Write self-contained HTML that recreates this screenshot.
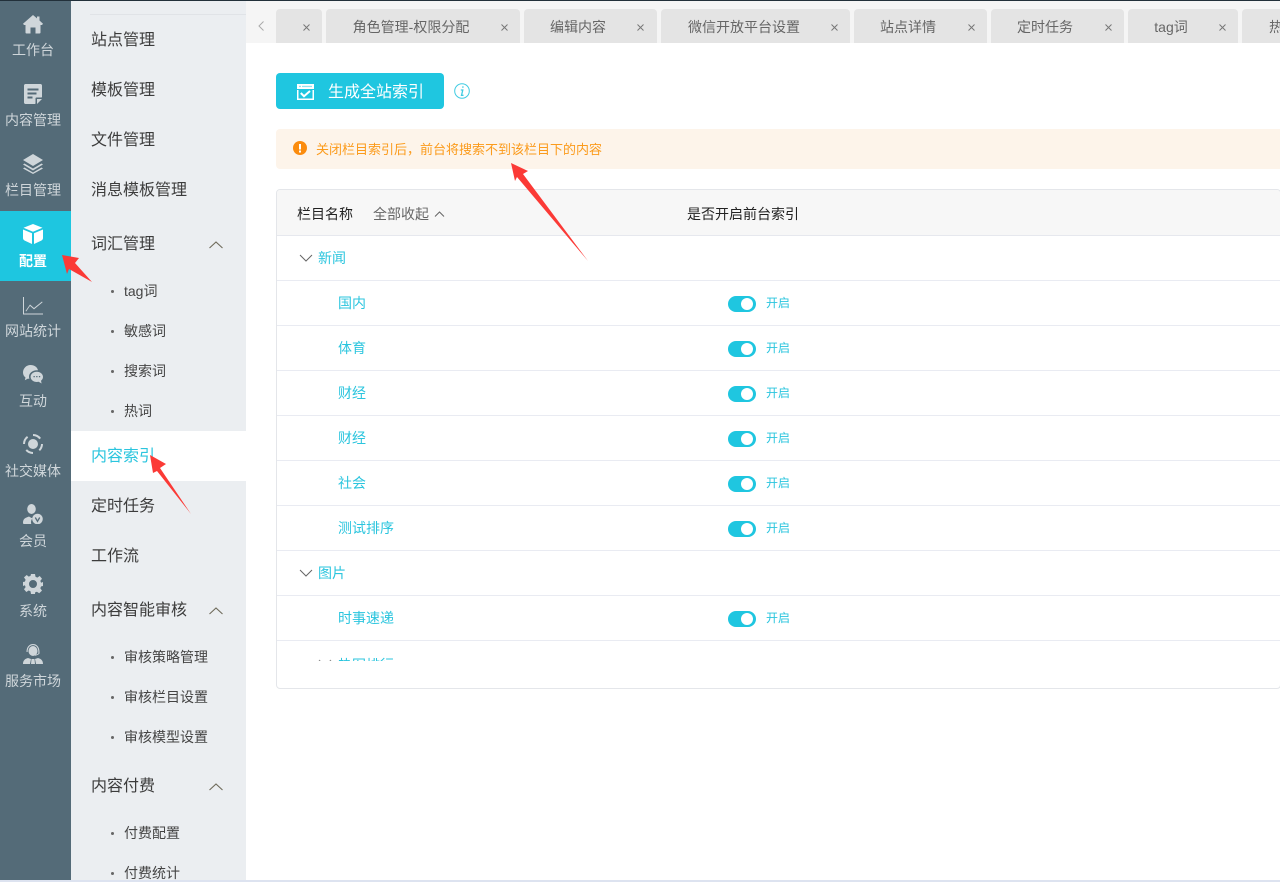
<!DOCTYPE html>
<html lang="zh"><head><meta charset="utf-8"><title>内容索引</title>
<style>
*{box-sizing:border-box}
html,body{margin:0;padding:0;width:1280px;height:882px;overflow:hidden;background:#fff;font-family:"Liberation Sans","Noto Sans CJK SC",sans-serif}
.a{position:absolute;white-space:nowrap}
#top{left:0;top:0;width:1280px;height:1px;background:#22303a;z-index:9}
#bot{left:0;top:880px;width:1280px;height:2px;background:#dde3f0;z-index:9}
#nav{left:0;top:0;width:71px;height:880px;background:#546b78}
.ni{position:absolute;left:0;width:71px;height:70px;color:#cfd6da;font-size:14px;text-align:center}
.ni svg{position:absolute;left:23px;top:14px;width:20px;height:20px;fill:#cfd6da}
.ni span{position:absolute;left:0;width:66px;top:40px;line-height:20px;text-align:center;white-space:nowrap}
.ni.on{background:#1ec6e0;color:#fff;font-weight:bold}
.ni.on svg{fill:#fff}
#side{left:71px;top:0;width:175px;height:880px;background:#ebeef1;overflow:hidden}
.s1{position:absolute;left:20px;font-size:16px;line-height:20px;color:#3c3c3c;margin-top:2px}
.s2{position:absolute;left:53px;font-size:14px;line-height:20px;color:#444}
.dot{position:absolute;left:40px;width:3px;height:3px;background:#666;border-radius:50%}
.cv{position:absolute;left:137px;width:16px;height:10px}
#tabs{left:246px;top:1px;width:1034px;height:42px;background:#f5f5f5;overflow:hidden}
.t{position:absolute;top:8px;height:34px;background:#e4e4e4;border-radius:4px 4px 0 0;font-size:14px;line-height:36px;color:#666}
.t b{font-weight:normal;position:absolute;left:0;top:0;text-align:center}
.t i{position:absolute;top:15px;width:7px;height:7px;margin-left:-.5px}
#btn{left:276px;top:73px;width:168px;height:36px;background:#1fc6e0;border-radius:4px;color:#fff;font-size:16px;line-height:40px;padding-left:52px}
#tip{left:276px;top:129px;width:1004px;height:40px;background:#fdf4ea;border-radius:4px 0 0 4px;color:#fb9b1c;font-size:13px;line-height:42px;padding-left:40px}
#tbl{left:276px;top:189px;width:1005px;height:500px;border:1px solid #e4e6ea;border-radius:4px;overflow:hidden}
#hd{position:absolute;left:0;top:0;width:100%;height:46px;background:#f7f7f7;border-bottom:1px solid #e6e8ee}
#hd .c{margin-top:1px}
.line{position:absolute;left:0;width:100%;height:1px;background:#e9ebf2}
.c{position:absolute;font-size:14px;line-height:20px;color:#2bc5de;white-space:nowrap}
.sw{position:absolute;left:451px;width:28px;height:16px;border-radius:8px;background:#1fc6e0}
.sw:after{content:"";position:absolute;right:3px;top:2px;width:12px;height:12px;border-radius:50%;background:#fff}
.on2{position:absolute;left:489px;font-size:12px;line-height:20px;color:#2bc5de}
.arrow{position:absolute;left:0;top:0;z-index:8;pointer-events:none}
</style></head><body>
<div class="a" id="top"></div>
<div class="a" id="nav">
<div class="ni" style="top:0"><svg style="top:14px" viewBox="0 0 20 20"><path d="M10 1 14 4.400V2.500h2.500v4L20 9.800l-1 1.200H17.500v7.500c0 .6-.4 1-1 1H12.500v-6h-5v6h-4c-.6 0-1-.4-1-1V11H1L0 9.800z"/></svg><span>工作台</span></div>
<div class="ni" style="top:70px"><svg viewBox="0 0 20 20"><path fill-rule="evenodd" d="M2.500 0h15c.8 0 1.500.7 1.500 1.500V13l-.5.500H13.500c-.6 0-1 .4-1 1v5l-.5.500H2.500C1.700 20 1 19.300 1 18.500V1.500C1 .7 1.700 0 2.500 0zM4.500 4.500v2h11v-2zM4.500 8.500v2h9v-2zM4.500 12.500v2h5v-2z"/><path d="M14 15h5l-5 5z"/></svg><span>内容管理</span></div>
<div class="ni" style="top:140px"><svg viewBox="0 0 20 20"><path d="M10 0 20 6 10 12 0 6z"/><path d="M1.500 9.500 10 14.500l8.500-5 1.500 1-10 6-10-6zM1.500 13.500l8.500 5 8.500-5 1.500 1-10 5.500-10-5.500z"/></svg><span>栏目管理</span></div>
<div class="ni on" style="top:211px"><svg style="top:13px" viewBox="0 0 20 20"><path d="M10 0 19.500 3.800 10 7.800.5 3.800zM0 5.500 9 9.300V20L2 16.800C.7 16.200 0 15.300 0 14zM20 5.500 11 9.300V20l7-3.200c1.300-.6 2-1.500 2-2.800z"/></svg><span>配置</span></div>
<div class="ni" style="top:281px"><svg style="top:15px" viewBox="0 0 20 18"><path d="M0 0h1v16.500h19.500V17.500H0zM2.500 14 7 7.500l4 3.500 8-6.500.6.700-8.600 7.200-4-3.500-3.700 5.500z"/></svg><span>网站统计</span></div>
<div class="ni" style="top:351px"><svg viewBox="0 0 20 20"><path d="M7.500 0c3.800 0 7 2.300 7.500 5.300-.4-.1-.8-.1-1.200-.1-4.300 0-7.800 2.800-7.800 6.500 0 .8.100 1.400.4 2.100-.5 0-1.100-.1-1.500-.2L1.800 15.300l.7-2.800C.9 11.300 0 9.600 0 7.500 0 3.400 3.300 0 7.500 0z"/><path fill-rule="evenodd" d="M13.800 6.800c3.400 0 6.200 2.300 6.200 5.100 0 1.500-.7 2.800-2 3.800l.6 2.800-3-1.700c-.6.100-1.200.2-1.800.2-3.400 0-6.200-2.200-6.200-5.100s2.800-5.100 6.200-5.100zM10.500 11v1.300h1.300V11zM13.200 11v1.300h1.300V11zM15.900 11v1.300h1.300V11z"/></svg><span>互动</span></div>
<div class="ni" style="top:421px"><svg style="top:13px" viewBox="0 0 20 20"><circle cx="10" cy="10" r="5"/><path d="M10 0a10 10 0 0 1 8 4l-1.700 1.200A8 8 0 0 0 10 2zM20 10a10 10 0 0 1-3 7l-1.400-1.400A8 8 0 0 0 18 10zM10 20a10 10 0 0 1-7.500-3.400l1.500-1.300A8 8 0 0 0 10 18zM0 10A10 10 0 0 1 4 2l1.200 1.600A8 8 0 0 0 2 10z"/></svg><span>社交媒体</span></div>
<div class="ni" style="top:491px"><svg style="top:13px" viewBox="0 0 20 20"><ellipse cx="8.500" cy="5" rx="4.300" ry="5"/><path d="M0 19c0-3 1-4.500 3.500-5.500l2.500-1 2.500 1.500c.8 0 1.500-.3 2-.8-1.600 1.200-2.500 3-2.500 5 0 .6.100 1.200.3 1.800H1c-.6 0-1-.4-1-1z"/><circle cx="14.500" cy="15" r="5.300"/><path d="M12.300 13.500l2.200 3.800 2.200-3.800" fill="none" stroke="#546b78" stroke-width="1.300"/></svg><span>会员</span></div>
<div class="ni" style="top:561px"><svg style="top:13px" viewBox="0 0 20 20"><path fill-rule="evenodd" d="M8 0h4l.5 2.800 1.800.8L16.700 2 19 4.700l-1.700 2.200.8 1.900L20 8v4l-1.900.4-.8 1.800 1.700 2.400-2.800 2.700-2.300-1.600-1.800.7L12 20H8l-.5-2.800-1.800-.7L3.300 18 1 15.300l1.600-2.200-.7-1.900L0 12V8l1.900-.4.700-1.800L1 3.400 3.700 1l2 1.600 1.800-.7zM10 6a4 4 0 1 0 0 8 4 4 0 0 0 0-8z"/></svg><span>系统</span></div>
<div class="ni" style="top:631px"><svg style="top:13px" viewBox="0 0 20 20"><ellipse cx="10" cy="7" rx="4.500" ry="5"/><path d="M3.500 8C3.500 3 6.300 0 10 0s6.500 3 6.500 8v1.500c0 .5-2.500 2-4.500 2.200v-.9c1.700-.3 3.400-1.100 3.400-1.600V8c0-4.400-2.400-6.900-5.400-6.900S4.600 3.600 4.600 8z"/><path d="M0 20c0-3.500 2-5.300 5-6l3 1-1 5zM20 20c0-3.500-2-5.300-5-6l-3 1 1 5zM8.500 15h3l.5 5H8z"/></svg><span>服务市场</span></div>
</div>
<div class="a" id="side">
<div style="position:absolute;left:19px;top:14px;width:156px;height:1px;background:#e0e3e7"></div>
<div class="s1" style="top:29px">站点管理</div>
<div class="s1" style="top:79px">模板管理</div>
<div class="s1" style="top:129px">文件管理</div>
<div class="s1" style="top:179px">消息模板管理</div>
<div class="s1" style="top:233px">词汇管理</div>
<svg class="cv" style="top:240px" viewBox="0 0 16 10"><path d="M1.500 8 8 2l6.500 6" fill="none" stroke="#6e6a5a" stroke-width="1.100"/></svg>
<div class="dot" style="top:290px"></div><div class="s2" style="top:281px">tag词</div>
<div class="dot" style="top:330px"></div><div class="s2" style="top:321px">敏感词</div>
<div class="dot" style="top:370px"></div><div class="s2" style="top:361px">搜索词</div>
<div class="dot" style="top:410px"></div><div class="s2" style="top:401px">热词</div>
<div style="position:absolute;left:0;top:431px;width:175px;height:50px;background:#fff"></div>
<div class="s1" style="top:445px;color:#2bc5de">内容索引</div>
<div class="s1" style="top:495px">定时任务</div>
<div class="s1" style="top:545px">工作流</div>
<div class="s1" style="top:599px">内容智能审核</div>
<svg class="cv" style="top:606px" viewBox="0 0 16 10"><path d="M1.500 8 8 2l6.500 6" fill="none" stroke="#6e6a5a" stroke-width="1.100"/></svg>
<div class="dot" style="top:656px"></div><div class="s2" style="top:647px">审核策略管理</div>
<div class="dot" style="top:696px"></div><div class="s2" style="top:687px">审核栏目设置</div>
<div class="dot" style="top:736px"></div><div class="s2" style="top:727px">审核模型设置</div>
<div class="s1" style="top:775px">内容付费</div>
<svg class="cv" style="top:782px" viewBox="0 0 16 10"><path d="M1.500 8 8 2l6.500 6" fill="none" stroke="#6e6a5a" stroke-width="1.100"/></svg>
<div class="dot" style="top:832px"></div><div class="s2" style="top:823px">付费配置</div>
<div class="dot" style="top:872px"></div><div class="s2" style="top:863px">付费统计</div>
</div>
<div class="a" id="tabs">
<svg style="position:absolute;left:11px;top:19px" width="8" height="12" viewBox="0 0 8 12"><path d="M6.500 1.500 2 6l4.500 4.500" fill="none" stroke="#aaa" stroke-width="1"/></svg>
<div class="t" style="left:30px;width:46px"><i style="left:27px"><svg width="7" height="7" viewBox="0 0 7 7" style="display:block"><path d="M.5.500l6 6m0-6-6 6" stroke="#777" stroke-width="1"/></svg></i></div>
<div class="t" style="left:80px;width:194px"><b style="width:170px">角色管理-权限分配</b><i style="left:175px"><svg width="7" height="7" viewBox="0 0 7 7" style="display:block"><path d="M.5.500l6 6m0-6-6 6" stroke="#777" stroke-width="1"/></svg></i></div>
<div class="t" style="left:278px;width:133px"><b style="width:108px">编辑内容</b><i style="left:113px"><svg width="7" height="7" viewBox="0 0 7 7" style="display:block"><path d="M.5.500l6 6m0-6-6 6" stroke="#777" stroke-width="1"/></svg></i></div>
<div class="t" style="left:415px;width:189px"><b style="width:166px">微信开放平台设置</b><i style="left:170px"><svg width="7" height="7" viewBox="0 0 7 7" style="display:block"><path d="M.5.500l6 6m0-6-6 6" stroke="#777" stroke-width="1"/></svg></i></div>
<div class="t" style="left:608px;width:133px"><b style="width:108px">站点详情</b><i style="left:114px"><svg width="7" height="7" viewBox="0 0 7 7" style="display:block"><path d="M.5.500l6 6m0-6-6 6" stroke="#777" stroke-width="1"/></svg></i></div>
<div class="t" style="left:745px;width:133px"><b style="width:108px">定时任务</b><i style="left:114px"><svg width="7" height="7" viewBox="0 0 7 7" style="display:block"><path d="M.5.500l6 6m0-6-6 6" stroke="#777" stroke-width="1"/></svg></i></div>
<div class="t" style="left:882px;width:110px"><b style="width:86px">tag词</b><i style="left:91px"><svg width="7" height="7" viewBox="0 0 7 7" style="display:block"><path d="M.5.500l6 6m0-6-6 6" stroke="#777" stroke-width="1"/></svg></i></div>
<div class="t" style="left:996px;width:60px"><b style="left:27px">热词</b></div>
</div>
<div class="a" id="btn">生成全站索引</div>
<svg class="a" style="left:297px;top:84px" width="17" height="16" viewBox="0 0 17 16"><path fill="#fff" d="M0 0h17v5H0z"/><rect x="2" y="1.800" width="2" height="1.300" fill="#8fe3f0"/><rect x="5" y="1.800" width="10" height="1.300" fill="#8fe3f0"/><path fill="#fff" fill-rule="evenodd" d="M0 6h17v10H0zM1.500 6v8.500h14V6z"/><path d="M3.800 9l3.200 3.200 6-5.200" stroke="#fff" stroke-width="2" fill="none"/></svg>
<svg class="a" style="left:454px;top:83px" width="16" height="16" viewBox="0 0 16 16"><circle cx="8" cy="8" r="7.300" fill="none" stroke="#3fcbe2" stroke-width="1"/><path d="M9 3.300 8.800 4.800M6.800 7h2L7.500 12.300h2" fill="none" stroke="#3fcbe2" stroke-width="1.300"/></svg>
<div class="a" id="tip">关闭栏目索引后，前台将搜索不到该栏目下的内容</div>
<svg class="a" style="left:293px;top:141px" width="14" height="14" viewBox="0 0 14 14"><circle cx="7" cy="7" r="7" fill="#fb8c0e"/><rect x="6" y="3" width="2" height="5.500" fill="#fff"/><rect x="6" y="9.500" width="2" height="2" fill="#fff"/></svg>
<div class="a" id="tbl">
<div id="hd">
<div class="c" style="left:20px;top:13px;color:#222">栏目名称</div>
<div class="c" style="left:96px;top:13px;color:#666">全部收起</div>
<svg style="position:absolute;left:157px;top:20px" width="11" height="8" viewBox="0 0 11 8"><path d="M1 6.500 5.500 2 10 6.500" fill="none" stroke="#666" stroke-width="1"/></svg>
<div class="c" style="left:410px;top:13px;color:#222">是否开启前台索引</div>
</div>
<svg style="position:absolute;left:22px;top:64px" width="14" height="8" viewBox="0 0 14 8"><path d="M1 1l6 6 6-6" fill="none" stroke="#666" stroke-width="1"/></svg>
<div class="c" style="left:41px;top:58px">新闻</div>
<div class="line" style="top:90px"></div>
<div class="c" style="left:61px;top:103px">国内</div><div class="sw" style="top:106px"></div><div class="on2" style="top:103px">开启</div>
<div class="line" style="top:135px"></div>
<div class="c" style="left:61px;top:148px">体育</div><div class="sw" style="top:151px"></div><div class="on2" style="top:148px">开启</div>
<div class="line" style="top:180px"></div>
<div class="c" style="left:61px;top:193px">财经</div><div class="sw" style="top:196px"></div><div class="on2" style="top:193px">开启</div>
<div class="line" style="top:225px"></div>
<div class="c" style="left:61px;top:238px">财经</div><div class="sw" style="top:241px"></div><div class="on2" style="top:238px">开启</div>
<div class="line" style="top:270px"></div>
<div class="c" style="left:61px;top:283px">社会</div><div class="sw" style="top:286px"></div><div class="on2" style="top:283px">开启</div>
<div class="line" style="top:315px"></div>
<div class="c" style="left:61px;top:328px">测试排序</div><div class="sw" style="top:331px"></div><div class="on2" style="top:328px">开启</div>
<div class="line" style="top:360px"></div>
<svg style="position:absolute;left:22px;top:379px" width="14" height="8" viewBox="0 0 14 8"><path d="M1 1l6 6 6-6" fill="none" stroke="#666" stroke-width="1"/></svg>
<div class="c" style="left:41px;top:373px">图片</div>
<div class="line" style="top:405px"></div>
<div class="c" style="left:61px;top:418px">时事速递</div><div class="sw" style="top:421px"></div><div class="on2" style="top:418px">开启</div>
<div class="line" style="top:450px"></div>
<div style="position:absolute;left:0;top:467px;width:500px;height:4px;overflow:hidden"><svg style="position:absolute;left:41px;top:2px" width="14" height="8" viewBox="0 0 14 8"><path d="M1 1l6 6 6-6" fill="none" stroke="#888" stroke-width="1"/></svg><div class="c" style="left:61px;top:-2px;margin-top:0">热图排行</div></div>
</div>
<svg class="arrow" width="1280" height="882" viewBox="0 0 1280 882">
<path fill="#fb3a36" d="M62 255 L79 258 L75 263 L92 282 L69 269 L67 274 Z"/>
<path fill="#fb3a36" d="M150 455 L166 464 L160 468 L191 514 L157 471 L153 473 Z"/>
<path fill="#fb3a36" d="M511 163 L528 171 L523 174 L588 261 L517 177 L515 181 Z"/>
</svg>
<div class="a" id="bot"></div>
</body></html>
